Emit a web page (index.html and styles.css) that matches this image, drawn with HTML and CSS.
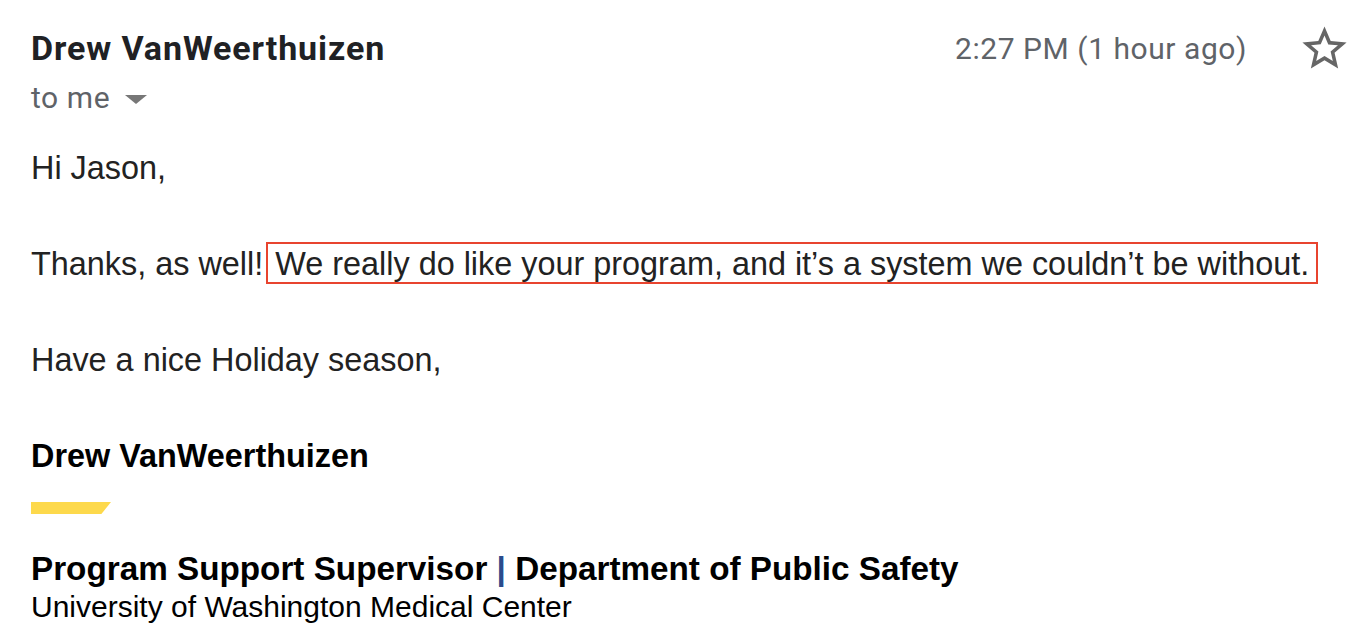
FILE: index.html
```html
<!DOCTYPE html>
<html>
<head>
<meta charset="utf-8">
<link rel="stylesheet" href="styles.css">
</head>
<body>
<div class="mail">
  <div class="head">
    <div class="sender">
      <div class="name">Drew VanWeerthuizen</div>
      <div class="to">to me <span class="caret"></span></div>
    </div>
    <div class="meta">
      <span class="time">2:27 PM (1 hour ago)</span>
      <svg class="star" viewBox="0 0 24 24" width="53" height="53"><path d="M22 9.24l-7.19-.62L12 2 9.19 8.63 2 9.24l5.46 4.730L5.820 21 12 17.27 18.18 21l-1.63-7.03L22 9.24zM12 15.4l-3.76 2.27 1-4.28-3.32-2.88 4.38-.38L12 6.1l1.71 4.04 4.38.38-3.32 2.88 1 4.28L12 15.4z" fill="#666"/></svg>
    </div>
  </div>
  <div class="body">
    <p>Hi Jason,</p>
    <p>Thanks, as well! <span class="hl">We really do like your program, and it’s a system we couldn’t be without.</span></p>
    <p>Have a nice Holiday season,</p>
    <div class="sig">
      <div class="sig-name">Drew VanWeerthuizen</div>
      <div class="bar"></div>
      <div class="sig-title">Program Support Supervisor <span class="pipe">|</span> Department of Public Safety</div>
      <div class="sig-org">University of Washington Medical Center</div>
    </div>
  </div>
</div>
</body>
</html>
```
FILE: styles.css
```css
html, body {
  margin: 0;
  padding: 0;
  background: #fff;
}
.mail {
  padding: 0 9px 0 31px;
}
.head {
  display: flex;
  justify-content: space-between;
  align-items: flex-start;
  padding-top: 26px;
}
.name {
  font-family: Roboto, "Liberation Sans", sans-serif;
  font-weight: 700;
  font-size: 34px;
  letter-spacing: 0.9px;
  line-height: 44px;
  color: #202124;
}
.to {
  font-family: Roboto, "Liberation Sans", sans-serif;
  font-size: 30px;
  letter-spacing: 0.6px;
  line-height: 40px;
  margin-top: 8px;
  color: #5f6368;
  display: flex;
  align-items: center;
}
.caret {
  display: inline-block;
  width: 0;
  height: 0;
  border-left: 11px solid transparent;
  border-right: 11px solid transparent;
  border-top: 9px solid #777;
  margin-left: 15px;
  margin-top: 2px;
}
.meta {
  display: flex;
  align-items: center;
  gap: 51px;
  margin-top: -4px;
}
.time {
  font-family: Roboto, "Liberation Sans", sans-serif;
  font-size: 30px;
  letter-spacing: 0.55px;
  line-height: 44px;
  margin-top: 1px;
  color: #5f6368;
}
.star {
  display: block;
}
.body {
  margin-top: 26px;
  font-family: "Liberation Sans", Arial, sans-serif;
  font-size: 32.4px;
  line-height: 48px;
  color: #222;
}
.body p {
  margin: 0 0 48px;
}
.hl {
  border: 2px solid #e8442f;
  padding: 2px 7px 0 7px;
  margin-left: -6px;
}
.sig {
  color: #000;
}
.sig-name {
  font-weight: 700;
  font-size: 32.4px;
  line-height: 48px;
}
.bar {
  width: 80px;
  height: 12px;
  margin: 22px 0 35px;
  background: #fdd94c;
  clip-path: polygon(0 0, 100% 0, 88% 100%, 0 100%);
}
.sig-title {
  font-weight: 700;
  font-size: 33.25px;
  line-height: 40px;
}
.pipe {
  color: #2b4b8c;
}
.sig-org {
  font-size: 30px;
  line-height: 36px;
}
```
